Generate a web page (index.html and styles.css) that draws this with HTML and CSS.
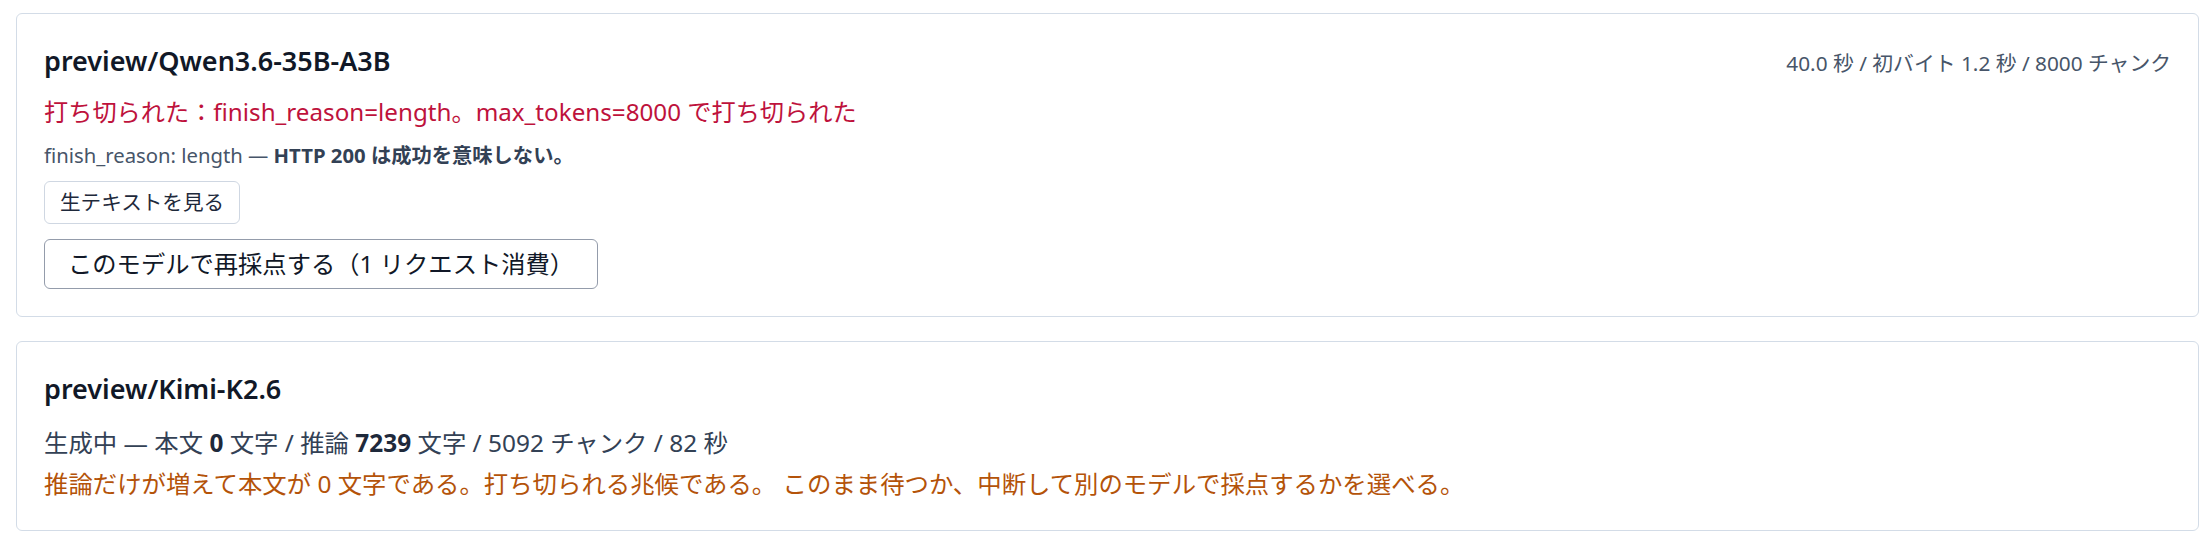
FILE: index.html
```html
<!DOCTYPE html>
<html lang="ja">
<head>
<meta charset="utf-8">
<title>preview</title>
<link rel="stylesheet" href="styles.css">
</head>
<body>
<div class="page">
  <section class="card">
    <div class="card-head">
      <h2 class="model">preview/Qwen3.6-35B-A3B</h2>
      <span class="meta">40.0 秒 / 初バイト 1.2 秒 / 8000 チャンク</span>
    </div>
    <p class="error">打ち切られた：finish_reason=length。max_tokens=8000 で打ち切られた</p>
    <p class="note">finish_reason: length — <strong>HTTP 200 は成功を意味しない。</strong></p>
    <div class="actions">
      <button class="btn btn-small" type="button">生テキストを見る</button>
      <button class="btn btn-large" type="button">このモデルで再採点する（1 リクエスト消費）</button>
    </div>
  </section>
  <section class="card">
    <div class="card-head">
      <h2 class="model">preview/Kimi-K2.6</h2>
    </div>
    <p class="progress">生成中 — 本文 <strong>0</strong> 文字 / 推論 <strong>7239</strong> 文字 / 5092 チャンク / 82 秒</p>
    <p class="warning">推論だけが増えて本文が 0 文字である。打ち切られる兆候である。 このまま待つか、中断して別のモデルで採点するかを選べる。</p>
  </section>
</div>
</body>
</html>
```
FILE: styles.css
```css
html, body {
  margin: 0;
  padding: 0;
  background: #ffffff;
}
body {
  font-family: "Noto Sans", "Noto Sans CJK JP", sans-serif;
  color: #1e293b;
  line-height: 1.5;
}
.page {
  padding: 13px 13px 0 16px;
  display: flex;
  flex-direction: column;
  gap: 24px;
}
.card {
  border: 1px solid #d3dce7;
  border-radius: 6px;
  padding: 27px;
  background: #fff;
}
.card-head {
  display: flex;
  align-items: baseline;
  justify-content: space-between;
  gap: 24px;
}
.model {
  margin: 0;
  font-size: 27px;
  font-weight: 600;
  color: #111827;
  line-height: 1.5;
}
.meta {
  font-size: 20.8px;
  color: #475569;
}
.error {
  margin: 12px 0 0;
  font-size: 24.2px;
  color: #be123c;
}
.note {
  margin: 11px 0 0;
  font-size: 20.3px;
  line-height: 1.45;
  color: #475569;
}
.note strong {
  color: #334155;
  font-weight: 700;
}
.actions {
  margin-top: 11px;
  display: flex;
  flex-direction: column;
  align-items: flex-start;
  gap: 15px;
}
.btn {
  font-family: inherit;
  background: #fff;
  color: #1e293b;
  border-radius: 6px;
  cursor: pointer;
}
.btn-small {
  font-size: 20.6px;
  line-height: 29px;
  padding: 6px 15px;
  border: 1px solid #cfd7e2;
}
.btn-large {
  font-size: 24.3px;
  line-height: 36px;
  padding: 6px 23px;
  border: 1px solid #949cab;
  color: #111827;
}
.progress {
  margin: 15px 0 0;
  font-size: 24.4px;
  color: #334155;
}
.progress strong {
  color: #1e293b;
  font-weight: 700;
}
.warning {
  margin: 5px 0 0;
  font-size: 24.4px;
  color: #b45309;
}
```
